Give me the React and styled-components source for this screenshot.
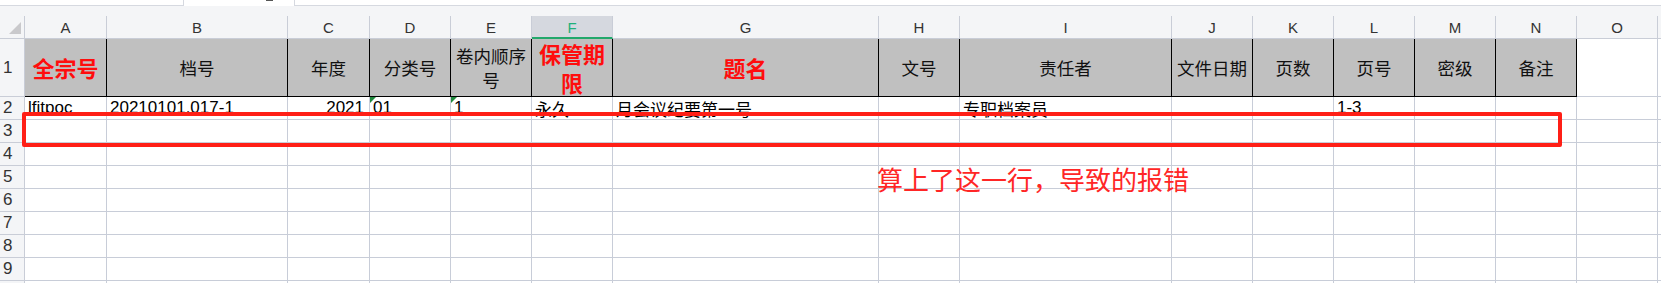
import React from "react";
import styled, { createGlobalStyle, css } from "styled-components";

const GlobalStyle = createGlobalStyle`
  html, body {
    margin: 0;
    padding: 0;
    background: #ffffff;
    overflow: hidden;
  }
  body {
    font-family: "Liberation Sans", "Noto Sans CJK SC", sans-serif;
  }
`;

const GRID_LINE = "#c8cdd8";
const HEAD_LINE = "#c9cdd7";
const HEAD_BG = "#f4f5f7";

const Sheet = styled.div`
  position: relative;
  width: 1661px;
  height: 283px;
  overflow: hidden;
  background: #fff;
`;

const TabRow = styled.div`
  display: flex;
  height: 6px;
  background: #fff;
`;

const TabFill = styled.div`
  width: ${(p) => (p.$grow ? "auto" : `${p.$w}px`)};
  flex: ${(p) => (p.$grow ? 1 : "none")};
  border-bottom: 1px solid #d6d9e0;
  box-sizing: border-box;
`;

const Tab = styled.div`
  width: 112px;
  box-sizing: border-box;
  border-left: 1px solid #d6d9e0;
  border-right: 1px solid #d6d9e0;
  background: #fff;
  position: relative;
  overflow: hidden;
`;

const TabGlyph = styled.span`
  position: absolute;
  left: 82px;
  top: 0;
  width: 7px;
  height: 1px;
  background: #555;
`;

const ToolStrip = styled.div`
  height: 10px;
  background: ${HEAD_BG};
`;

const Grid = styled.div`
  display: grid;
  grid-template-columns: 25px 82px 181px 82px 81px 81px 81px 266px 81px 212px 81px 81px 81px 81px 81px 81px 1fr;
  grid-template-rows: 23px 58px repeat(9, 23px);
`;

const Corner = styled.div`
  box-sizing: border-box;
  background: ${HEAD_BG};
  border-right: 1px solid ${HEAD_LINE};
  border-bottom: 1px solid ${HEAD_LINE};
  display: flex;
  justify-content: flex-end;
  align-items: flex-end;
  padding: 0 3px 4px 0;
`;

const ColHead = styled.div`
  box-sizing: border-box;
  background: ${HEAD_BG};
  border-right: 1px solid ${HEAD_LINE};
  border-bottom: 1px solid ${HEAD_LINE};
  display: flex;
  align-items: center;
  justify-content: center;
  font-family: "Liberation Sans", "Noto Sans CJK SC", sans-serif;
  font-size: 15px;
  color: #333;
  ${(p) =>
    p.$selected &&
    css`
      background: #d5d8df;
      color: #1fb07a;
      border-bottom: 2px solid #22a86c;
      padding-top: 1px;
    `}
`;

const RowHead = styled.div`
  box-sizing: border-box;
  background: ${HEAD_BG};
  border-right: 1px solid ${HEAD_LINE};
  border-bottom: 1px solid ${HEAD_LINE};
  display: flex;
  align-items: center;
  padding-left: 3px;
  font-family: "Liberation Sans", sans-serif;
  font-size: 17px;
  color: #333;
`;

const HeadCell = styled.div`
  box-sizing: border-box;
  background: #c0c0c0;
  border-right: 1px solid #000;
  border-bottom: 1px solid #000;
  display: flex;
  align-items: center;
  justify-content: center;
  text-align: center;
  font-family: "Noto Sans CJK SC", sans-serif;
  font-size: 17.5px;
  line-height: 24px;
  color: #111;
  ${(p) =>
    p.$red &&
    css`
      color: #ff0d0d;
      font-size: 22px;
      font-weight: 700;
      line-height: 29px;
    `}
`;

const Cell = styled.div`
  box-sizing: border-box;
  position: relative;
  border-right: 1px solid ${GRID_LINE};
  border-bottom: 1px solid ${GRID_LINE};
  display: flex;
  align-items: center;
  justify-content: ${(p) => (p.$right ? "flex-end" : "flex-start")};
  padding: ${(p) => (p.$right ? "0 5px 0 0" : "0 0 0 3px")};
  white-space: nowrap;
  font-family: "Liberation Sans", "Noto Sans CJK SC", sans-serif;
  font-size: 17px;
  color: #000;
  ${(p) =>
    p.$flag &&
    css`
      &::before {
        content: "";
        position: absolute;
        left: 0;
        top: 0;
        border-top: 6px solid #1e8a3c;
        border-right: 6px solid transparent;
      }
    `}
`;

const RedBox = styled.div`
  position: absolute;
  left: 22px;
  top: 112px;
  width: 1540px;
  height: 35px;
  box-sizing: border-box;
  border: 4px solid #ff1f16;
  border-radius: 2px;
  pointer-events: none;
`;

const Note = styled.div`
  position: absolute;
  left: 877px;
  top: 164px;
  font-family: "Noto Sans CJK SC", sans-serif;
  font-size: 26px;
  line-height: 30px;
  color: #ff2626;
  white-space: nowrap;
`;

const COLS = ["A", "B", "C", "D", "E", "F", "G", "H", "I", "J", "K", "L", "M", "N", "O", ""];

const HEADERS = [
  { text: ["全宗号"], red: true },
  { text: ["档号"] },
  { text: ["年度"] },
  { text: ["分类号"] },
  { text: ["卷内顺序", "号"] },
  { text: ["保管期", "限"], red: true },
  { text: ["题名"], red: true },
  { text: ["文号"] },
  { text: ["责任者"] },
  { text: ["文件日期"] },
  { text: ["页数"] },
  { text: ["页号"] },
  { text: ["密级"] },
  { text: ["备注"] },
];

const ROW2 = [
  { v: "lfjtpoc" },
  { v: "20210101.017-1" },
  { v: "2021", right: true },
  { v: "01", flag: true },
  { v: "1", flag: true },
  { v: "永久" },
  { v: "月会议纪要第一号" },
  { v: "" },
  { v: "专职档案员" },
  { v: "" },
  { v: "" },
  { v: "1-3" },
  { v: "" },
  { v: "" },
  { v: "" },
  { v: "" },
];

function CornerMark() {
  return (
    <svg width="12" height="12" viewBox="0 0 12 12">
      <polygon points="12,0 12,12 0,12" fill="#c9c9cc" />
    </svg>
  );
}

export default function App() {
  const emptyRows = [3, 4, 5, 6, 7, 8, 9, 10];
  return (
    <>
      <GlobalStyle />
      <Sheet>
        <TabRow>
          <TabFill $w={183} />
          <Tab>
            <TabGlyph />
          </Tab>
          <TabFill $grow />
        </TabRow>
        <ToolStrip />
        <Grid>
          <Corner>
            <CornerMark />
          </Corner>
          {COLS.map((c, i) => (
            <ColHead key={`ch${i}`} $selected={c === "F"}>
              {c}
            </ColHead>
          ))}

          <RowHead>1</RowHead>
          {HEADERS.map((h, i) => (
            <HeadCell key={`h${i}`} $red={h.red}>
              <span>
                {h.text.map((t, j) => (
                  <React.Fragment key={j}>
                    {j > 0 && <br />}
                    {t}
                  </React.Fragment>
                ))}
              </span>
            </HeadCell>
          ))}
          <Cell />
          <Cell />

          <RowHead>2</RowHead>
          {ROW2.map((d, i) => (
            <Cell key={`r2${i}`} $right={d.right} $flag={d.flag}>
              {d.v}
            </Cell>
          ))}

          {emptyRows.map((r) => (
            <React.Fragment key={`r${r}`}>
              <RowHead>{r < 10 ? r : ""}</RowHead>
              {COLS.map((_, i) => (
                <Cell key={`r${r}c${i}`} />
              ))}
            </React.Fragment>
          ))}
        </Grid>
        <RedBox />
        <Note>算上了这一行，导致的报错</Note>
      </Sheet>
    </>
  );
}
